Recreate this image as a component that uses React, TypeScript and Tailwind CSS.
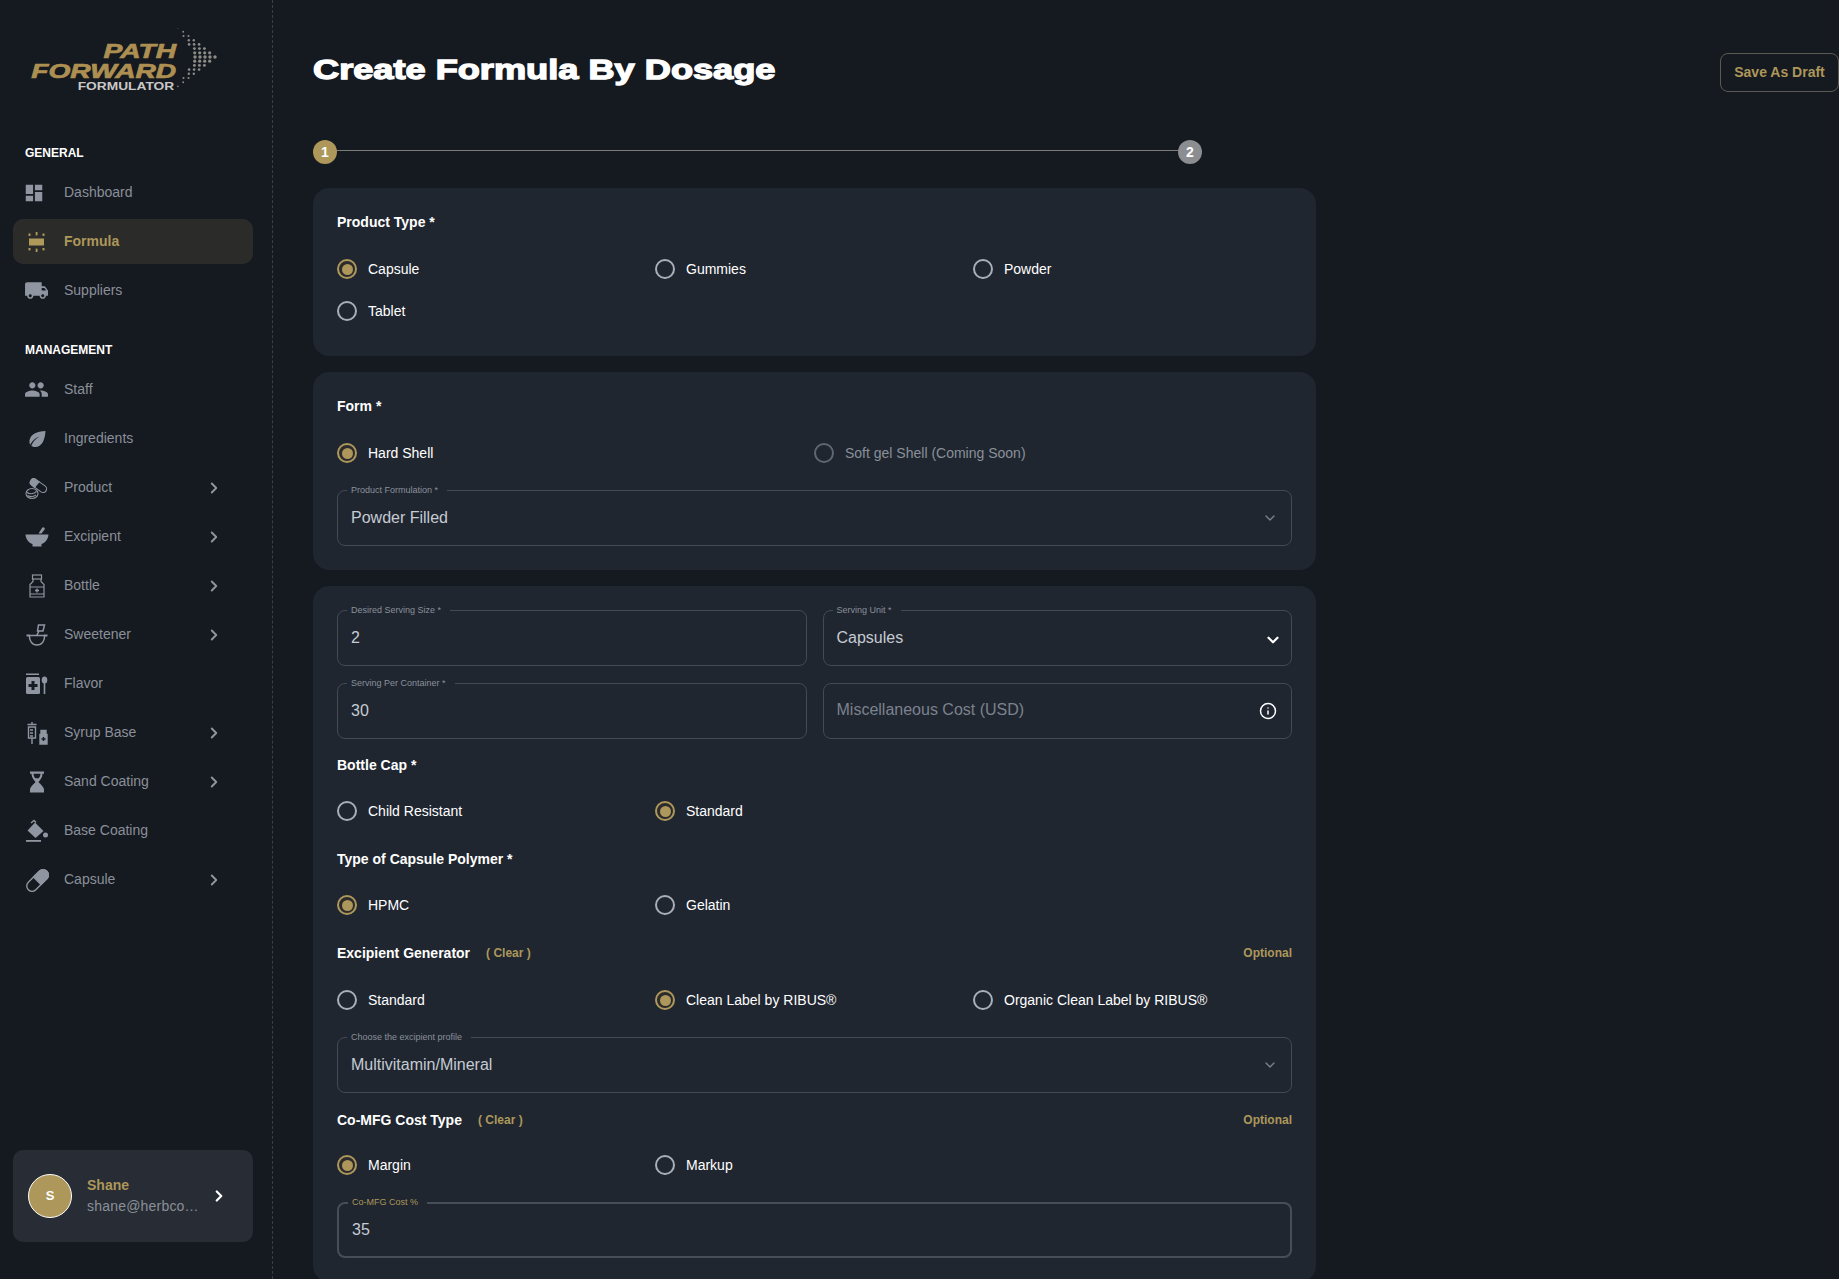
import { ChevronDown, ChevronRight, Info } from "lucide-react";
import { MdDashboard, MdLocalShipping, MdPeople } from "react-icons/md";
import type { ReactNode } from "react";

const FONT = "font-['Liberation_Sans',Arial,sans-serif]";
const GREY = "#8f96a1";
const THREE_COLS = "grid grid-cols-[318px_318px_1fr]";

function FormulaIcon() {
  return (
    <svg viewBox="0 0 24 24" className="w-[24px] h-[24px]" fill="#b09a5b">
      <rect x="4" y="8.500" width="15" height="7" />
      <rect x="10.700" y="2" width="1.800" height="3.400" />
      <rect x="10.700" y="18.600" width="1.800" height="3.400" />
      <rect x="3.500" y="3.500" width="2" height="2.400" />
      <rect x="17.500" y="3.500" width="2" height="2.400" />
      <rect x="3.500" y="18" width="2" height="2.400" />
      <rect x="17.500" y="18" width="2" height="2.400" />
    </svg>
  );
}

function LeafIcon() {
  return (
    <svg viewBox="0 0 24 24" className="w-[24px] h-[24px]" fill={GREY}>
      <path d="M20.500 4C12 4.500 5.500 7 4.500 13.500c-.2 1.500.1 3 .7 4.200C7.500 13.500 10.500 11 14.500 9.500c-3.500 2.200-6.500 5-8.200 9.200 1 .8 2.500 1.300 4 1.300 6.500 0 9.700-7 10.200-16Z" />
    </svg>
  );
}

function ProductIcon() {
  return (
    <svg viewBox="0 0 24 24" className="w-[24px] h-[24px]" fill="none" stroke={GREY} strokeWidth="1.100">
      <path d="M6 4.500a3 3 0 0 1 4-1.600l10 7a3.600 3.600 0 0 1-4 6l-9.500-7A3.200 3.200 0 0 1 6 4.500Z" />
      <path d="M6 4.500a3 3 0 0 1 4-1.600l4 3-4.600 5.500-3-2.500A3.200 3.200 0 0 1 6 4.500Z" fill={GREY} />
      <ellipse cx="7" cy="17.500" rx="6" ry="5" fill="#171b22" />
      <path d="M2 16.500c2.500 2 7 1.500 9.500-1M2.500 19.500c2.500 1.500 6 1.300 8.500-.5" />
    </svg>
  );
}

function MortarIcon() {
  return (
    <svg viewBox="0 0 24 24" className="w-[24px] h-[24px]" fill={GREY}>
      <path d="M.5 9.500h23c-.3 4.800-3.200 8.200-7 9.500v2.500h-9V19c-3.800-1.300-6.700-4.700-7-9.500Z" />
      <path d="M13.500 8.500 17 3a1.500 1.500 0 0 1 2.600 1.500L16.500 8.500Z" />
    </svg>
  );
}

function BottleIcon() {
  return (
    <svg viewBox="0 0 24 24" className="w-[24px] h-[24px]" fill="none" stroke={GREY} strokeWidth="1.200">
      <rect x="7.500" y="1" width="9" height="4" />
      <path d="M8 5v2.500L5 10.500V23h14V10.500L16 7.500V5" />
      <path d="M5 13h14M5 20h14" />
      <path d="M12 14.500v4M10 16.500h4" strokeWidth="1.400" />
    </svg>
  );
}

function SweetenerIcon() {
  return (
    <svg viewBox="0 0 24 24" className="w-[24px] h-[24px]" fill="none" stroke={GREY} strokeWidth="1.500">
      <path d="M13.500 2h6l-1.500 6h-5.500Z" />
      <path d="M14 8l-2.500 5" />
      <path d="M1.500 12.500h3.500M19 12.500h3.500" strokeWidth="2" />
      <path d="M4.500 12.500h15" />
      <path d="M4.500 12.500c-.5 5 2.500 9.500 7.500 9.500s8-4.500 7.500-9.500" />
    </svg>
  );
}

function FlavorIcon() {
  return (
    <svg viewBox="0 0 24 24" className="w-[24px] h-[24px]">
      <rect x="1" y="1.500" width="13" height="1.500" fill={GREY} />
      <rect x="1" y="5" width="14" height="17" rx="1.500" fill={GREY} />
      <path d="M8 9v9M3.500 13.500h9" stroke="#171b22" strokeWidth="3" />
      <ellipse cx="19.500" cy="8" rx="2.800" ry="3.500" fill={GREY} />
      <rect x="18.700" y="10" width="1.600" height="12" fill={GREY} />
    </svg>
  );
}

function SyrupIcon() {
  return (
    <svg viewBox="0 0 24 24" className="w-[24px] h-[24px]" fill="none" stroke={GREY} strokeWidth="1.400">
      <path d="M2.500 3.500h9M7 1v2.500M3.500 6h7v11h-7zM7 17v6" />
      <path d="M5 9h3M5 12h3M5 15h3" />
      <path d="M15 13.500h7v9.500h-7z" fill={GREY} />
      <path d="M16 9.500h5v4h-5z" fill={GREY} />
      <path d="M18.500 16v4M16.500 18h4" stroke="#171b22" />
    </svg>
  );
}

function HourglassIcon() {
  return (
    <svg viewBox="0 0 24 24" className="w-[24px] h-[24px]" fill={GREY}>
      <path d="M5 1.500h14v2.200h-1.500c0 3.500-2 6-4 8.300 2 2.300 5.500 5 5.500 7.700v2.800H5v-2.800c0-2.700 3.500-5.400 5.500-7.700-2-2.300-4-4.800-4-8.300H5Z" />
      <path d="M8.500 3.700h7c-.1 1.800-.8 3.300-1.700 4.500h-3.600c-.9-1.200-1.600-2.700-1.700-4.500Z" fill="#171b22" />
    </svg>
  );
}

function BaseCoatIcon() {
  return (
    <svg viewBox="0 0 24 24" className="w-[24px] h-[24px]" fill={GREY}>
      <path d="M10 3.500 18.500 12 10.500 19 2.500 11.500Z" />
      <path d="M6 4l3-2.500 2 2" fill="none" stroke={GREY} strokeWidth="1.400" />
      <circle cx="20.500" cy="16" r="2.500" />
      <rect x="1" y="21" width="15" height="1.800" />
    </svg>
  );
}

function CapsuleIcon() {
  return (
    <svg viewBox="0 0 24 24" className="w-[24px] h-[24px]" fill="none" stroke={GREY} strokeWidth="1.400">
      <path d="M3.300 14.300 14.300 3.300a5.300 5.300 0 0 1 7.500 7.500L10.800 21.800a5.300 5.300 0 0 1-7.500-7.500Z" />
      <path d="M8.500 9 14.300 3.300a5.300 5.300 0 0 1 7.500 7.500L16 16.500Z" fill={GREY} />
    </svg>
  );
}

type NavEntry = { label: string; icon: ReactNode; arrow?: boolean; active?: boolean };

const general: NavEntry[] = [
  { label: "Dashboard", icon: <MdDashboard className="w-[22px] h-[22px] text-[#8f96a1] -ml-[2px]" /> },
  { label: "Formula", icon: <FormulaIcon />, active: true },
  { label: "Suppliers", icon: <MdLocalShipping className="w-[25px] h-[25px] text-[#8f96a1] -ml-[1px]" /> },
];

const management: NavEntry[] = [
  { label: "Staff", icon: <MdPeople className="w-[25px] h-[25px] text-[#8f96a1] -ml-[1px]" /> },
  { label: "Ingredients", icon: <LeafIcon /> },
  { label: "Product", icon: <ProductIcon />, arrow: true },
  { label: "Excipient", icon: <MortarIcon />, arrow: true },
  { label: "Bottle", icon: <BottleIcon />, arrow: true },
  { label: "Sweetener", icon: <SweetenerIcon />, arrow: true },
  { label: "Flavor", icon: <FlavorIcon /> },
  { label: "Syrup Base", icon: <SyrupIcon />, arrow: true },
  { label: "Sand Coating", icon: <HourglassIcon />, arrow: true },
  { label: "Base Coating", icon: <BaseCoatIcon /> },
  { label: "Capsule", icon: <CapsuleIcon />, arrow: true },
];

function NavItem({ item }: { item: NavEntry }) {
  return (
    <div
      className={`flex items-center h-[45px] rounded-[10px] pl-[12px] pr-[30px] ${
        item.active ? "bg-[#2b2b29] text-[#ad975a] font-bold" : "text-[#8a9099]"
      }`}
    >
      <span className="w-[39px] shrink-0 flex items-center">{item.icon}</span>
      <span className="flex-1 text-[14px]">{item.label}</span>
      {item.arrow && <ChevronRight className="w-[18px] h-[18px] text-[#8f96a1]" strokeWidth={2.5} />}
    </div>
  );
}

function Logo() {
  const dots: ReactNode[] = [];
  // chevron of dots, thicker and bigger towards the tip
  for (let row = -7; row <= 7; row++) {
    const away = Math.abs(row);
    const edge = 38 - away * 5.3;
    const cols = Math.floor((7 - away) / 1.7);
    for (let col = 0; col <= cols; col++) {
      dots.push(
        <circle key={`${row}-${col}`} cx={edge - col * 5} cy={29 + row * 4.2} r={0.8 + (7 - away) * 0.13} fill="#8d8c86" />
      );
    }
  }
  return (
    <div className="flex h-[101px] pt-[28px] pl-[20px]">
      <div className="flex flex-col items-end w-[143px] shrink-0 italic font-bold mt-[12px]">
        <div className="text-[#ad8f52] text-[21px] leading-[21px] scale-x-[1.340] origin-right [-webkit-text-stroke:0.7px_#ad8f52]">PATH</div>
        <div className="text-[#ad8f52] text-[21px] leading-[20px] scale-x-[1.340] origin-right whitespace-nowrap [-webkit-text-stroke:0.7px_#ad8f52]">FORWARD</div>
        <div className="text-[#c9c9c7] text-[11px] not-italic leading-[10px] mr-[2px] scale-x-[1.250] origin-right whitespace-nowrap">FORMULATOR</div>
      </div>
      <svg viewBox="0 0 40 62" className="w-[40px] h-[62px] shrink-0 ml-[1px]">
        {dots}
      </svg>
    </div>
  );
}

function Sidebar() {
  return (
    <aside className="w-[273px] h-full shrink-0 flex flex-col border-r border-dashed border-[#3a3e46] pl-[13px] pr-[19px]">
      <Logo />
      <div className="text-[12px] font-bold text-white pl-[12px] mt-[45px] leading-[14px]">GENERAL</div>
      <nav className="flex flex-col gap-[4px] mt-[10px]">
        {general.map((item) => (
          <NavItem key={item.label} item={item} />
        ))}
      </nav>
      <div className="text-[12px] font-bold text-white pl-[12px] mt-[30px] leading-[14px]">MANAGEMENT</div>
      <nav className="flex flex-col gap-[4px] mt-[10px]">
        {management.map((item) => (
          <NavItem key={item.label} item={item} />
        ))}
      </nav>
      <div className="mt-auto mb-[37px] h-[92px] rounded-[10px] bg-[#282c34] flex items-center pl-[15px] pr-[25px]">
        <div className="w-[44px] h-[44px] rounded-full bg-[#ad975a] border border-white flex items-center justify-center text-white text-[13px] font-bold shrink-0">
          S
        </div>
        <div className="ml-[15px] w-[113px] min-w-0">
          <div className="text-[14px] font-bold text-[#ad975a] leading-[20px]">Shane</div>
          <div className="text-[14px] text-[#8a9099] leading-[22px] truncate tracking-[0.2px]">shane@herbcoglobal.com</div>
        </div>
        <ChevronRight className="w-[18px] h-[18px] text-white ml-auto shrink-0" strokeWidth={3} />
      </div>
    </aside>
  );
}

function Radio({ label, checked, disabled }: { label: string; checked?: boolean; disabled?: boolean }) {
  return (
    <label className={`flex items-center gap-[11px] h-[20px] text-[14px] ${disabled ? "text-[#8a9099]" : "text-white"}`}>
      <span
        className={`w-[20px] h-[20px] rounded-full border-2 flex items-center justify-center shrink-0 ${
          checked ? "border-[#ad975a] bg-[#2b2a2c]" : disabled ? "border-[#5f6671]" : "border-[#a9aeb8]"
        }`}
      >
        {checked && <span className="w-[11px] h-[11px] rounded-full bg-[#ad975a]" />}
      </span>
      {label}
    </label>
  );
}

function SectionLabel({ children }: { children: ReactNode }) {
  return <span className="text-[14px] font-bold text-white leading-[20px]">{children}</span>;
}

function Field({
  label,
  value,
  right,
  active,
}: {
  label: string;
  value: string;
  right?: ReactNode;
  active?: boolean;
}) {
  return (
    <fieldset className={`h-[60px] rounded-[8px] px-[13px] min-w-0 ${active ? "border-2 border-[#474d59]" : "border border-[#434955]"}`}>
      <legend className={`ml-[-4px] pl-[4px] pr-[9px] text-[9px] leading-[9px] ${active ? "text-[#ad975a]" : "text-[#8a9099]"}`}>
        {label}
      </legend>
      <div className="flex items-center justify-between h-[46px]">
        <span className="text-[16px] text-[#c6cbd3]">{value}</span>
        {right}
      </div>
    </fieldset>
  );
}

function Optional({ title }: { title: string }) {
  return (
    <div className="flex items-center h-[20px]">
      <SectionLabel>{title}</SectionLabel>
      <span className="text-[12px] font-bold text-[#ad975a] ml-[16px]">( Clear )</span>
      <span className="ml-auto text-[12px] font-bold text-[#ad975a]">Optional</span>
    </div>
  );
}

const grey = <ChevronDown className="w-[16px] h-[16px] text-[#7c828d]" />;

function Main() {
  return (
    <main className="flex-1 min-w-0 h-full overflow-hidden pl-[40px]">
      <div className="flex items-start justify-between h-[140px]">
        <h1 className="mt-[54px] text-[27px] leading-[32px] font-bold text-white scale-x-[1.340] origin-left whitespace-nowrap [-webkit-text-stroke:1.3px_white]">
          Create Formula By Dosage
        </h1>
        <button
          type="button"
          className="mt-[53px] h-[39px] w-[119px] shrink-0 rounded-[8px] border border-[#5c5a50] text-[14px] font-bold text-[#ad975a]"
        >
          Save As Draft
        </button>
      </div>

      <div className="flex items-start w-[889px] h-[24px] text-[14px] font-bold text-white">
        <div className="w-[24px] h-[24px] rounded-full bg-[#ad975a] flex items-center justify-center shrink-0">1</div>
        <div className="flex-1 h-px bg-[#7d7d78] mt-[10px]" />
        <div className="w-[24px] h-[24px] rounded-full bg-[#8b8d91] flex items-center justify-center shrink-0">2</div>
      </div>

      <div className="w-[1003px] mt-[24px] flex flex-col gap-[16px]">
        <section className="h-[168px] rounded-[16px] bg-[#1f2630] px-[24px] pt-[22px]">
          <SectionLabel>Product Type *</SectionLabel>
          <div className={`${THREE_COLS} gap-y-[22px] mt-[25px]`}>
            <Radio label="Capsule" checked />
            <Radio label="Gummies" />
            <Radio label="Powder" />
            <Radio label="Tablet" />
          </div>
        </section>

        <section className="h-[198px] rounded-[16px] bg-[#1f2630] px-[24px] pt-[22px]">
          <SectionLabel>Form *</SectionLabel>
          <div className="grid grid-cols-[477px_1fr] mt-[25px] mb-[23px]">
            <Radio label="Hard Shell" checked />
            <Radio label="Soft gel Shell (Coming Soon)" disabled />
          </div>
          <Field label="Product Formulation *" value="Powder Filled" right={grey} />
        </section>

        <section className="rounded-[16px] bg-[#1f2630] px-[24px] pt-[20px] pb-[24px]">
          <div className="grid grid-cols-2 gap-x-[16px] gap-y-[13px]">
            <Field label="Desired Serving Size *" value="2" />
            <Field
              label="Serving Unit *"
              value="Capsules"
              right={<ChevronDown className="w-[18px] h-[18px] text-white -mr-[4px] mt-[4px]" strokeWidth={3} />}
            />
            <Field label="Serving Per Container *" value="30" />
            <div className="h-[56px] mt-[4px] rounded-[8px] border border-[#434955] px-[13px] flex items-center justify-between">
              <span className="text-[16px] text-[#7c828d] -mt-[2px]">Miscellaneous Cost (USD)</span>
              <Info className="w-[18px] h-[18px] text-white mr-[1px]" strokeWidth={2} />
            </div>
          </div>

          <div className="mt-[14px]">
            <SectionLabel>Bottle Cap *</SectionLabel>
          </div>
          <div className={`${THREE_COLS} mt-[24px]`}>
            <Radio label="Child Resistant" />
            <Radio label="Standard" checked />
          </div>

          <div className="mt-[26px]">
            <SectionLabel>Type of Capsule Polymer *</SectionLabel>
          </div>
          <div className={`${THREE_COLS} mt-[24px]`}>
            <Radio label="HPMC" checked />
            <Radio label="Gelatin" />
          </div>

          <div className="mt-[28px]">
            <Optional title="Excipient Generator" />
          </div>
          <div className={`${THREE_COLS} mt-[27px] mb-[23px]`}>
            <Radio label="Standard" />
            <Radio label="Clean Label by RIBUS®" checked />
            <Radio label="Organic Clean Label by RIBUS®" />
          </div>
          <Field label="Choose the excipient profile" value="Multivitamin/Mineral" right={grey} />

          <div className="mt-[17px]">
            <Optional title="Co-MFG Cost Type" />
          </div>
          <div className={`${THREE_COLS} mt-[25px] mb-[23px]`}>
            <Radio label="Margin" checked />
            <Radio label="Markup" />
          </div>
          <Field label="Co-MFG Cost %" value="35" active />
        </section>
      </div>
    </main>
  );
}

export default function App() {
  return (
    <div className={`flex h-[1279px] overflow-hidden bg-[#151920] ${FONT}`}>
      <Sidebar />
      <Main />
    </div>
  );
}
